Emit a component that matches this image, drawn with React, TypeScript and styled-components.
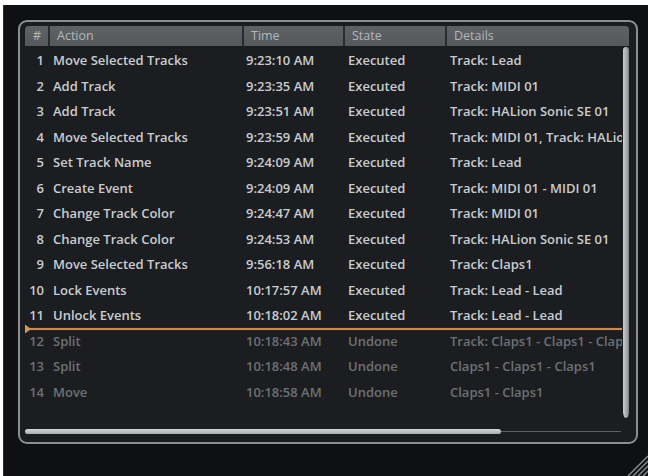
import React from 'react';
import styled, { createGlobalStyle } from 'styled-components';

const GlobalStyle = createGlobalStyle`
  html, body {
    margin: 0;
    padding: 0;
    background: #ffffff;
  }
  body {
    font-family: "Open Sans", "Noto Sans", "Liberation Sans", sans-serif;
  }
`;

const Screen = styled.div`
  position: relative;
  box-sizing: border-box;
  margin: 5px 0 0 3px;
  height: 471px;
  padding: 15px 0 0 14px;
  background: #0e1013;
  border-left: 1px solid #2c2e31;
`;

const Panel = styled.div`
  box-sizing: border-box;
  width: 620px;
  height: 424px;
  padding: 4px 7px 8px 5px;
  display: flex;
  flex-direction: column;
  background: #1b1d20;
  border: 2px solid #8b8e91;
  border-radius: 9px;
`;

const HeaderRow = styled.div`
  display: grid;
  grid-template-columns: 23px 194px 101px 102px 1fr;
  height: 20px;
  flex-shrink: 0;
  background: #2a2c2f;
  border-radius: 4px 4px 0 0;
  overflow: hidden;
`;

const HeaderCell = styled.div<{ $first?: boolean }>`
  box-sizing: border-box;
  padding-left: ${p => (p.$first ? '8px' : '7px')};
  margin-left: ${p => (p.$first ? '0' : '2px')};
  background: linear-gradient(#5f6265, #56595c);
  color: #b4b7ba;
  font-size: 12.5px;
  line-height: 20px;
  white-space: nowrap;
  overflow: hidden;
`;

const Body = styled.div`
  flex: 1;
  display: flex;
  margin-top: 1px;
  min-height: 0;
`;

const List = styled.div`
  flex: 1;
  overflow: hidden;
`;

const Row = styled.div<{ $undone?: boolean }>`
  display: grid;
  grid-template-columns: 23px 193px 102px 102px 1fr;
  height: 25.5px;
  line-height: 26.5px;
  font-size: 13px;
  font-weight: 600;
  color: ${p => (p.$undone ? '#6d7175' : '#c9ccd0')};
`;

const Cell = styled.div`
  padding-left: 5px;
  white-space: nowrap;
  overflow: hidden;
`;

const NumCell = styled.div`
  padding-right: 4px;
  text-align: right;
  white-space: nowrap;
`;

// undo position: everything below this line has been undone
const UndoMarker = styled.div`
  position: relative;
  height: 0;

  &::before {
    content: '';
    position: absolute;
    left: -2px;
    right: 0;
    top: 0;
    height: 2px;
    background: #c98b4f;
    box-shadow: 0 0 2px rgba(120, 50, 30, 0.9);
  }

  &::after {
    content: '';
    position: absolute;
    left: -2px;
    top: -5px;
    border-left: 8px solid #d49a5c;
    border-top: 6px solid transparent;
    border-bottom: 6px solid transparent;
  }
`;

const VScroll = styled.div`
  width: 6px;
  margin-left: 1px;
  display: flex;
  flex-direction: column;
`;

const VThumb = styled.div`
  height: 98%;
  border-radius: 3px 3px 3px 3px / 3px 3px 6px 6px;
  background: linear-gradient(90deg, #c9ccce, #a6a9ac 60%, #7d8083);
`;

const HScroll = styled.div`
  position: relative;
  margin-top: 3px;
  height: 5px;
  width: 596px;
  display: flex;
  align-items: center;

  &::before {
    content: '';
    position: absolute;
    left: 0;
    right: 0;
    top: 2px;
    height: 1px;
    background: #5d6064;
  }
`;

const HThumb = styled.div`
  position: relative;
  width: 476px;
  height: 5px;
  border-radius: 3px;
  background: linear-gradient(#d3d6d8, #a9acaf);
`;

const Grip = styled.svg`
  position: absolute;
  right: 0;
  bottom: 0;
`;

type Entry = {
  n: number;
  action: string;
  time: string;
  state: string;
  details: string;
};

const entries: Entry[] = [
  { n: 1, action: 'Move Selected Tracks', time: '9:23:10 AM', state: 'Executed', details: 'Track: Lead' },
  { n: 2, action: 'Add Track', time: '9:23:35 AM', state: 'Executed', details: 'Track: MIDI 01' },
  { n: 3, action: 'Add Track', time: '9:23:51 AM', state: 'Executed', details: 'Track: HALion Sonic SE 01' },
  { n: 4, action: 'Move Selected Tracks', time: '9:23:59 AM', state: 'Executed', details: 'Track: MIDI 01, Track: HALion Sonic SE 01' },
  { n: 5, action: 'Set Track Name', time: '9:24:09 AM', state: 'Executed', details: 'Track: Lead' },
  { n: 6, action: 'Create Event', time: '9:24:09 AM', state: 'Executed', details: 'Track: MIDI 01 - MIDI 01' },
  { n: 7, action: 'Change Track Color', time: '9:24:47 AM', state: 'Executed', details: 'Track: MIDI 01' },
  { n: 8, action: 'Change Track Color', time: '9:24:53 AM', state: 'Executed', details: 'Track: HALion Sonic SE 01' },
  { n: 9, action: 'Move Selected Tracks', time: '9:56:18 AM', state: 'Executed', details: 'Track: Claps1' },
  { n: 10, action: 'Lock Events', time: '10:17:57 AM', state: 'Executed', details: 'Track: Lead - Lead' },
  { n: 11, action: 'Unlock Events', time: '10:18:02 AM', state: 'Executed', details: 'Track: Lead - Lead' },
  { n: 12, action: 'Split', time: '10:18:43 AM', state: 'Undone', details: 'Track: Claps1 - Claps1 - Claps1' },
  { n: 13, action: 'Split', time: '10:18:48 AM', state: 'Undone', details: 'Claps1 - Claps1 - Claps1' },
  { n: 14, action: 'Move', time: '10:18:58 AM', state: 'Undone', details: 'Claps1 - Claps1' },
];

const App = () => {
  const lastDone = entries.filter(e => e.state === 'Executed').length;

  return (
    <>
      <GlobalStyle />
      <Screen>
        <Panel>
          <HeaderRow>
            <HeaderCell $first>#</HeaderCell>
            <HeaderCell>Action</HeaderCell>
            <HeaderCell>Time</HeaderCell>
            <HeaderCell>State</HeaderCell>
            <HeaderCell>Details</HeaderCell>
          </HeaderRow>
          <Body>
            <List>
              {entries.map(e => (
                <React.Fragment key={e.n}>
                  <Row $undone={e.state === 'Undone'}>
                    <NumCell>{e.n}</NumCell>
                    <Cell>{e.action}</Cell>
                    <Cell>{e.time}</Cell>
                    <Cell>{e.state}</Cell>
                    <Cell>{e.details}</Cell>
                  </Row>
                  {e.n === lastDone && <UndoMarker />}
                </React.Fragment>
              ))}
            </List>
            <VScroll>
              <VThumb />
            </VScroll>
          </Body>
          <HScroll>
            <HThumb />
          </HScroll>
        </Panel>
        <Grip width="22" height="22" viewBox="0 0 22 22">
          <g stroke="#8a8d90" strokeWidth="1.5">
            <line x1="2" y1="22" x2="22" y2="2" />
            <line x1="7" y1="22" x2="22" y2="7" />
            <line x1="12" y1="22" x2="22" y2="12" />
            <line x1="17" y1="22" x2="22" y2="17" />
          </g>
        </Grip>
      </Screen>
    </>
  );
};

export default App;
